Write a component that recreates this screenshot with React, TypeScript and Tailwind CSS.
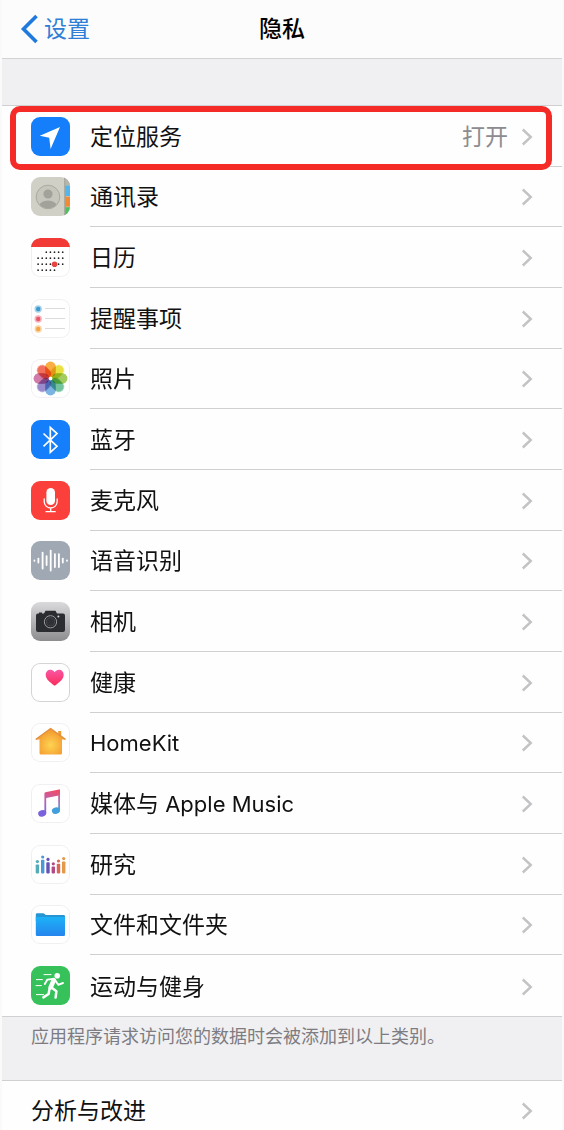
import type { ReactNode } from "react";

function Tile({ className = "", children }: { className?: string; children?: ReactNode }) {
  return (
    <svg
      viewBox="0 0 39 39"
      aria-hidden="true"
      className={`size-[39px] shrink-0 rounded-[9px] ${className}`}
    >
      {children}
    </svg>
  );
}

const WHITE_TILE = "bg-white ring-1 ring-inset ring-[#f0f0f2]";

function LocationIcon() {
  return (
    <Tile className="bg-[#147efb]">
      <path d="M29 10 L8.8 18.7 L18.2 20.8 L19.6 32 Z" fill="#fff" />
    </Tile>
  );
}

function ContactsIcon() {
  return (
    <Tile className="bg-[#d0d0c6]">
      <defs>
        <clipPath id="contact-face">
          <circle cx="17" cy="20" r="11.3" />
        </clipPath>
      </defs>
      <rect x="33.5" width="1" height="39" fill="#85857c" />
      <rect x="34.3" width="4.7" height="8.5" fill="#b5b5ac" />
      <rect x="34.3" y="8.5" width="4.7" height="10.5" fill="#55b4e9" />
      <rect x="34.3" y="19.6" width="4.7" height="10" fill="#ee8b34" />
      <rect x="34.3" y="30.2" width="4.7" height="8.8" fill="#52be62" />
      <circle cx="17" cy="20" r="11.8" fill="#c6c6bd" stroke="#a5a59d" strokeWidth="0.9" />
      <circle cx="17" cy="17" r="4.6" fill="#a2a29b" />
      <ellipse cx="17" cy="29" rx="9" ry="5.4" fill="#a2a29b" clipPath="url(#contact-face)" />
    </Tile>
  );
}

const CALENDAR_DOTS = [
  { y: 14.2, xs: [15.3, 19.4, 23.5, 27.6, 31.7] },
  { y: 20.2, xs: [7.1, 11.2, 15.3, 19.4, 23.5, 27.6, 31.7] },
  { y: 26.2, xs: [7.1, 11.2, 15.3, 19.4, 27.6, 31.7] },
  { y: 32.2, xs: [7.1, 11.2, 15.3, 19.4, 23.5] },
];

function CalendarIcon() {
  return (
    <Tile className={WHITE_TILE}>
      <path d="M0 9 A9 9 0 0 1 9 0 H30 A9 9 0 0 1 39 9 Z" fill="#f23b37" />
      {CALENDAR_DOTS.map((row) =>
        row.xs.map((x) => <circle key={`${x}-${row.y}`} cx={x} cy={row.y} r="0.85" fill="#222" />),
      )}
      <circle cx="23.6" cy="26.2" r="2.8" fill="#e64541" />
    </Tile>
  );
}

function RemindersIcon() {
  const items = [
    { y: 10, color: "#3a9bd0" },
    { y: 20, color: "#e8596a" },
    { y: 30, color: "#f2a545" },
  ];
  return (
    <Tile className={WHITE_TILE}>
      {items.map(({ y, color }) => (
        <g key={y}>
          <circle cx="7.2" cy={y} r="3.7" fill={color} opacity="0.45" />
          <circle cx="7.2" cy={y} r="2.2" fill={color} />
          <path d={`M14 ${y - 0.5}H34`} stroke="#d2d2d5" strokeWidth="0.8" />
        </g>
      ))}
    </Tile>
  );
}

function PhotosIcon() {
  const petals = [
    "#f8a52c",
    "#e6dc2a",
    "#98c84b",
    "#62bb93",
    "#6cace0",
    "#8f7fc6",
    "#cb6c9f",
    "#f0604a",
  ];
  return (
    <Tile className={WHITE_TILE}>
      {petals.map((color, i) => (
        <rect
          key={color}
          x="14.2"
          y="2.6"
          width="10.6"
          height="15.4"
          rx="5.3"
          fill={color}
          opacity="0.9"
          transform={`rotate(${i * 45} 19.5 19.5)`}
          className="mix-blend-multiply"
        />
      ))}
      <circle cx="19.5" cy="19.5" r="1.5" fill="#fff" />
    </Tile>
  );
}

function BluetoothIcon() {
  return (
    <Tile className="bg-[#147efb]">
      <path
        d="M12.5 13.5 L26 26.3 L19.3 32.4 V7.4 L26 13.5 L12.5 26.3"
        fill="none"
        stroke="#fff"
        strokeWidth="1.7"
      />
    </Tile>
  );
}

function MicrophoneIcon() {
  return (
    <Tile className="bg-[#fb3f3b]">
      <rect x="15.4" y="7" width="8.6" height="17" rx="4.3" fill="#fff" />
      <path
        d="M13.2 18 V20.5 A6.5 6.5 0 0 0 26.2 20.5 V18 M19.7 27 V30.5 M15 30.7 H24.2"
        fill="none"
        stroke="#fff"
        strokeWidth="1.3"
        strokeLinecap="round"
      />
    </Tile>
  );
}

function SpeechIcon() {
  const bars = [
    [3.4, 0.4],
    [7.4, 4],
    [11.6, 16],
    [15.6, 9],
    [19.7, 20],
    [23.9, 13],
    [27.9, 13],
    [31.8, 4],
    [36, 0.4],
  ];
  return (
    <Tile className="bg-[#a0a9b3]">
      {bars.map(([x, h]) => (
        <path
          key={x}
          d={`M${x} ${19.6 - h / 2}V${19.6 + h / 2}`}
          stroke="#fff"
          strokeWidth="1.8"
          strokeLinecap="round"
        />
      ))}
    </Tile>
  );
}

function CameraIcon() {
  return (
    <Tile>
      <defs>
        <linearGradient id="camera-bg" x1="0" y1="0" x2="0" y2="1">
          <stop offset="0" stopColor="#dadadd" />
          <stop offset="1" stopColor="#8d8d90" />
        </linearGradient>
      </defs>
      <rect width="39" height="39" fill="url(#camera-bg)" />
      <path
        d="M7 11.5 H8 V10.4 H11 V11.5 H13 L14.5 8.8 H24.5 L26 11.5 H32 Q34 11.5 34 13.5 V28 Q34 30 32 30 H7 Q5 30 5 28 V13.5 Q5 11.5 7 11.5 Z"
        fill="#2b2c30"
      />
      <circle cx="19.5" cy="19.8" r="6.1" fill="#222327" stroke="#a1a1a4" strokeWidth="1" />
      <circle cx="19.5" cy="19.8" r="4.1" fill="#303136" stroke="#55565b" strokeWidth="0.7" />
      <circle cx="27.4" cy="14.5" r="1" fill="#d9d9dc" />
    </Tile>
  );
}

function HealthIcon() {
  return (
    <Tile className="bg-white ring-1 ring-inset ring-[#d4d4d6]">
      <defs>
        <linearGradient id="heart" x1="0" y1="0" x2="0" y2="1">
          <stop offset="0" stopColor="#f956a5" />
          <stop offset="1" stopColor="#fb2c59" />
        </linearGradient>
      </defs>
      <path
        d="M23.7 22.8 C18.5 19 14.7 16 14.7 11.7 C14.7 8.8 16.8 6.7 19.4 6.7 C21.3 6.7 22.8 7.6 23.7 9.2 C24.6 7.6 26.1 6.7 28 6.7 C30.6 6.7 32.7 8.8 32.7 11.7 C32.7 16 28.9 19 23.7 22.8 Z"
        fill="url(#heart)"
      />
    </Tile>
  );
}

function HomeIcon() {
  return (
    <Tile className={WHITE_TILE}>
      <defs>
        <radialGradient id="home" gradientUnits="userSpaceOnUse" cx="19.6" cy="22" r="15">
          <stop offset="0" stopColor="#fed352" />
          <stop offset="1" stopColor="#f39a2e" />
        </radialGradient>
      </defs>
      <path
        d="M19.6 6 L5.5 16.4 H8.5 V30 Q8.5 31.5 10 31.5 H29.5 Q31 31.5 31 30 V16.4 H33.8 L30.2 13.6 V8 H27.2 V11.4 Z"
        fill="url(#home)"
      />
      <path
        d="M5.3 16.2 L19.6 5.6 L34 16.2"
        fill="none"
        stroke="#e2913c"
        strokeWidth="1.5"
        strokeLinecap="round"
        strokeLinejoin="round"
      />
    </Tile>
  );
}

function MusicIcon() {
  return (
    <Tile className={WHITE_TILE}>
      <defs>
        <linearGradient id="note" gradientUnits="userSpaceOnUse" x1="22" y1="6" x2="14" y2="32">
          <stop offset="0" stopColor="#ef4c6a" />
          <stop offset="0.45" stopColor="#b765b6" />
          <stop offset="1" stopColor="#6b63ee" />
        </linearGradient>
        <linearGradient id="note-stem" gradientUnits="userSpaceOnUse" x1="28" y1="6" x2="26" y2="29">
          <stop offset="0" stopColor="#e9506f" />
          <stop offset="0.5" stopColor="#a877bf" />
          <stop offset="1" stopColor="#3ea5e4" />
        </linearGradient>
      </defs>
      <path d="M13.4 9.6 Q13.4 8.6 14.4 8.3 L28 5.4 Q29 5.2 29 6.2 V11.2 L15.2 14 V29 H13.4 Z" fill="url(#note)" />
      <ellipse cx="11.2" cy="29.4" rx="4.1" ry="3.2" transform="rotate(-15 11.2 29.4)" fill="#7b62dc" />
      <path d="M27.2 10 H29 V26 H27.2 Z" fill="url(#note-stem)" />
      <ellipse cx="25" cy="26.6" rx="4.1" ry="3.2" transform="rotate(-15 25 26.6)" fill="#419fdc" />
    </Tile>
  );
}

function ResearchIcon() {
  const bars = [
    { x: 6.4, dot: 16.6, top: 19.4, color: "#55acb9" },
    { x: 11.7, dot: 12, top: 14.8, color: "#4a98d8" },
    { x: 17, dot: 14.4, top: 17.2, color: "#6552b5" },
    { x: 22.3, dot: 18.8, top: 21.6, color: "#b44a83" },
    { x: 27.5, dot: 16, top: 18.8, color: "#db6550" },
    { x: 32.7, dot: 13.6, top: 16.4, color: "#e29a4a" },
  ];
  return (
    <Tile className={WHITE_TILE}>
      {bars.map(({ x, dot, top, color }) => (
        <g key={x} fill={color}>
          <circle cx={x} cy={dot} r="1.6" />
          <rect x={x - 1.7} y={top} width="3.4" height={28.4 - top} rx="0.8" />
        </g>
      ))}
    </Tile>
  );
}

function FilesIcon() {
  return (
    <Tile className={WHITE_TILE}>
      <defs>
        <linearGradient id="folder" x1="0" y1="0" x2="0" y2="1">
          <stop offset="0" stopColor="#1cb2f6" />
          <stop offset="1" stopColor="#2585ee" />
        </linearGradient>
      </defs>
      <path d="M4.8 9.5 Q4.8 8.2 6.1 8.2 H12 Q13 8.2 13.7 9 L14.7 10 H32.7 Q34 10 34 11.3 V16 H4.8 Z" fill="#2795d3" />
      <path d="M4.8 12 H34 V29.8 Q34 31 32.8 31 H6 Q4.8 31 4.8 29.8 Z" fill="url(#folder)" />
    </Tile>
  );
}

function FitnessIcon() {
  return (
    <Tile className="bg-[#37c15b]">
      <circle cx="26.2" cy="9.8" r="2.8" fill="#fff" />
      <g fill="none" stroke="#fff" strokeLinecap="round" strokeLinejoin="round">
        <path d="M22.8 14.2 L19.6 21.4" strokeWidth="4.6" />
        <path d="M22 13 L16.4 13.6 L13.8 18" strokeWidth="1.9" />
        <path d="M24.4 14.5 L27.2 18.8 L32 17" strokeWidth="1.9" />
        <path d="M20.8 21.8 L25.4 25.2 L24.6 31.6" strokeWidth="2.5" />
        <path d="M18.6 22.4 L17.6 28 L12.4 31.4" strokeWidth="2.5" />
        <path d="M13 8.6 H20 M5.4 13.6 H11.4 M5 19.6 H10.4 M5.4 28.6 H12.6" strokeWidth="1" />
      </g>
    </Tile>
  );
}

function Chevron() {
  return (
    <svg viewBox="0 0 12 18" aria-hidden="true" className="h-[18px] w-3 shrink-0">
      <path d="M1.8 1.5 L9.8 9 L1.8 16.5" fill="none" stroke="#c3c3c6" strokeWidth="2.4" />
    </svg>
  );
}

const ROWS: { id: string; label: ReactNode; icon: ReactNode; value?: string }[] = [
  { id: "location", label: "定位服务", icon: <LocationIcon />, value: "打开" },
  { id: "contacts", label: "通讯录", icon: <ContactsIcon /> },
  { id: "calendar", label: "日历", icon: <CalendarIcon /> },
  { id: "reminders", label: "提醒事项", icon: <RemindersIcon /> },
  { id: "photos", label: "照片", icon: <PhotosIcon /> },
  { id: "bluetooth", label: "蓝牙", icon: <BluetoothIcon /> },
  { id: "microphone", label: "麦克风", icon: <MicrophoneIcon /> },
  { id: "speech", label: "语音识别", icon: <SpeechIcon /> },
  { id: "camera", label: "相机", icon: <CameraIcon /> },
  { id: "health", label: "健康", icon: <HealthIcon /> },
  { id: "homekit", label: <span className="text-[22px]">HomeKit</span>, icon: <HomeIcon /> },
  {
    id: "music",
    label: (
      <>
        媒体与<span className="text-[22px]"> Apple Music</span>
      </>
    ),
    icon: <MusicIcon />,
  },
  { id: "research", label: "研究", icon: <ResearchIcon /> },
  { id: "files", label: "文件和文件夹", icon: <FilesIcon /> },
  { id: "fitness", label: "运动与健身", icon: <FitnessIcon /> },
];

export default function App() {
  return (
    <div className="h-screen overflow-y-auto bg-[#fafafa] px-0.5 font-['Inter','Noto_Sans_CJK_SC',sans-serif] text-[23px] leading-8 text-[#111] [scrollbar-width:none]">
      <header className="grid h-[59px] grid-cols-[1fr_auto_1fr] items-center border-b border-[#d3d3d5] bg-[#fcfcfc]">
        <a href="#settings" className="flex items-center gap-1.5 justify-self-start pl-[18px] text-[#2f7fd6]">
          <svg viewBox="0 0 18 30" aria-hidden="true" className="h-[30px] w-[18px]">
            <path d="M16.5 2 L3.5 15 L16.5 28" fill="none" stroke="#2079dc" strokeWidth="3.6" />
          </svg>
          设置
        </a>
        <h1 className="font-medium text-black">隐私</h1>
      </header>

      <main className="bg-[#f0f0f2] pt-[46px]">
        <ul className="grid min-h-[912px] auto-rows-fr border-y border-[#d0d0d3] bg-[#fefefe]">
          {ROWS.map(({ id, label, icon, value }, index) => (
            <li key={id} className="relative">
              <a href={`#${id}`} className="flex h-full items-center gap-5 pl-[29px]">
                {icon}
                <span
                  className={`flex h-full flex-1 items-center gap-[13px] pt-0.5 pr-[29px] ${
                    index < ROWS.length - 1 ? "border-b border-[#d0d0d3]" : ""
                  }`}
                >
                  <span className="flex-1">{label}</span>
                  {value && <span className="text-[#8c8c90]">{value}</span>}
                  <Chevron />
                </span>
              </a>
              {index === 0 && (
                <span className="pointer-events-none absolute top-0 right-2.5 -bottom-[3px] left-2 z-10 rounded-[10px] border-6 border-[#f52b28]" />
              )}
            </li>
          ))}
        </ul>

        <p className="h-[63px] px-[29px] pt-1.5 text-[18px] leading-7 text-[#7c7c82]">
          应用程序请求访问您的数据时会被添加到以上类别。
        </p>

        <a
          href="#analytics"
          className="flex h-[60px] items-center border-t border-[#d0d0d3] bg-[#fefefe] pr-[29px] pl-[29px]"
        >
          <span className="flex-1">分析与改进</span>
          <Chevron />
        </a>
      </main>
    </div>
  );
}
